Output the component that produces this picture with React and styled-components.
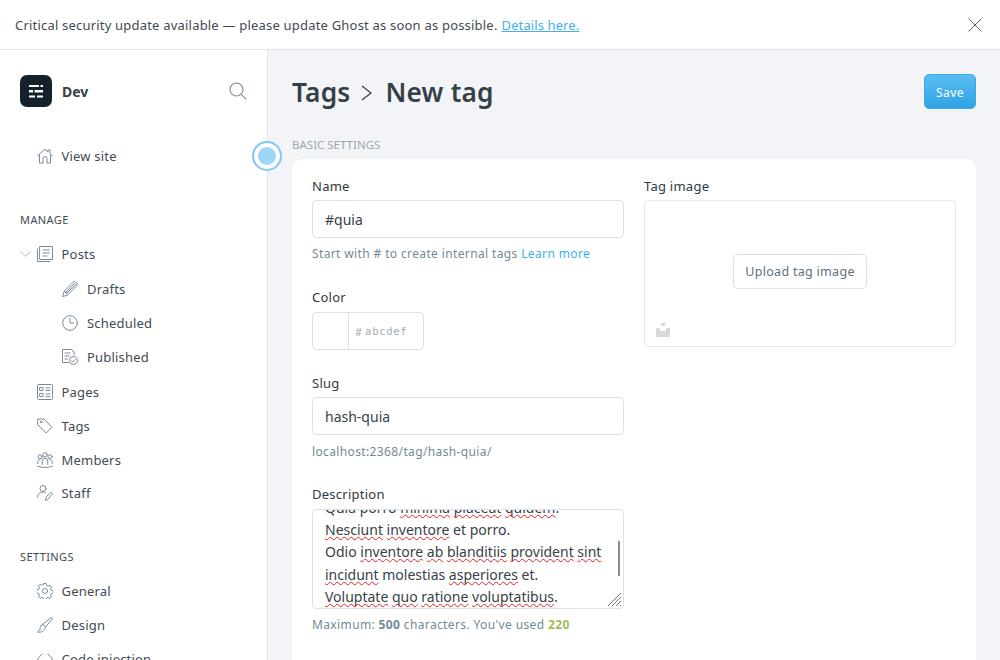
import React from "react";
import styled, { createGlobalStyle } from "styled-components";

const GlobalStyle = createGlobalStyle`
  html, body {
    margin: 0;
    height: 100%;
    overflow: hidden;
    background: #fff;
    font-family: "Noto Sans", "Open Sans", sans-serif;
    color: #394047;
  }
  * { box-sizing: border-box; }
`;

const Page = styled.div`
  width: 1000px;
  height: 660px;
  display: flex;
  flex-direction: column;
  overflow: hidden;
`;

const Banner = styled.div`
  height: 50px;
  flex: none;
  display: flex;
  align-items: center;
  justify-content: space-between;
  padding: 0 18px 0 15px;
  border-bottom: 1px solid #e1e3e5;
  font-size: 13px;
  letter-spacing: 0.2px;
  color: #3f4a52;
`;

const BannerLink = styled.a`
  color: #3eb0ef;
  text-decoration: underline;
  margin-left: 4px;
  letter-spacing: 0.1px;
`;

const Body = styled.div`
  flex: 1;
  display: flex;
  min-height: 0;
`;

const Sidebar = styled.aside`
  position: relative;
  width: 268px;
  flex: none;
  border-right: 1px solid #e5e7ed;
  padding: 25px 20px 0;
`;

const Brand = styled.div`
  display: flex;
  align-items: center;
  height: 32px;
  margin-bottom: 32px;
`;

const Logo = styled.div`
  width: 32px;
  height: 32px;
  border-radius: 7px;
  background: #15212a;
  display: flex;
  align-items: center;
  justify-content: center;
`;

const BrandName = styled.div`
  margin-left: 10px;
  flex: 1;
  font-size: 14px;
  font-weight: 700;
  color: #394047;
`;

const PulseAnchor = styled.div`
  position: absolute;
  right: 0;
  top: 91px;
  width: 0;
  height: 30px;
`;

const Pulse = styled.div`
  position: absolute;
  left: -15px;
  top: 50%;
  transform: translateY(-50%);
  width: 30px;
  height: 30px;
  border: 2px solid #7fc8f5;
  border-radius: 50%;
  background: #fff;
  display: flex;
  align-items: center;
  justify-content: center;
  &::after {
    content: "";
    width: 18px;
    height: 18px;
    border-radius: 50%;
    background: #9cd6f8;
  }
`;

const Nav = styled.nav`
  display: flex;
  flex-direction: column;
`;

const SubNav = styled.div`
  display: flex;
  flex-direction: column;
  padding: 1px 0;
`;

const Item = styled.div`
  display: flex;
  align-items: center;
  height: ${(p) => p.$h || 34}px;
  padding-left: ${(p) => (p.$sub ? 42 : 17)}px;
  font-size: 13px;
  letter-spacing: 0.2px;
  color: #3f4a52;
  position: relative;
  svg.icon {
    width: 16px;
    height: 16px;
    flex: none;
    margin-right: ${(p) => (p.$sub ? 9 : 8.5)}px;
    fill: none;
    stroke: #7c8b9a;
    stroke-width: 1;
  }
`;

const Caret = styled.svg`
  position: absolute;
  left: 0;
  top: 50%;
  margin-top: -3px;
  width: 11px;
  height: 6px;
  fill: none;
  stroke: #b5bec6;
  stroke-width: 1;
`;

const SectionTitle = styled.div`
  font-size: 11px;
  letter-spacing: 0.4px;
  color: #3f4a52;
  height: 16px;
  line-height: 16px;
  margin-top: ${(p) => p.$top || 39}px;
  margin-bottom: 9px;
`;

const Main = styled.main`
  flex: 1;
  min-width: 0;
  background: #f3f4f8;
  padding: 24px 24px 0;
`;

const Header = styled.div`
  display: flex;
  align-items: center;
  justify-content: space-between;
  height: 35px;
`;

const Title = styled.h1`
  margin: 0;
  display: flex;
  align-items: center;
  font-size: 26.3px;
  font-weight: 600;
  color: #343f46;
  letter-spacing: 0.2px;
`;

const Chevron = styled.svg`
  width: 14px;
  height: 18px;
  margin: 3px 11px 0 10px;
  fill: none;
  stroke: #343f46;
  stroke-width: 1.2;
`;

const SaveButton = styled.button`
  width: 52px;
  height: 35px;
  border: 1px solid #3ea9e8;
  border-radius: 5px;
  background: linear-gradient(#5bbcf3, #2ea3e4);
  color: #fff;
  font-family: inherit;
  font-size: 12px;
  letter-spacing: 0.4px;
  padding: 1px 0 0;
`;

const SectionLabel = styled.div`
  margin-top: 28px;
  height: 16px;
  line-height: 16px;
  font-size: 11.5px;
  color: #98a8b4;
  text-transform: uppercase;
`;

const Card = styled.section`
  margin-top: 6px;
  background: #fff;
  border-radius: 10px;
  padding: 18px 20px 0;
  height: 520px;
  display: grid;
  grid-template-columns: 312px 312px;
  column-gap: 20px;
  box-shadow: 0 0 1px rgba(0, 0, 0, 0.06);
`;

const Column = styled.div`
  display: flex;
  flex-direction: column;
`;

const Field = styled.div`
  margin-bottom: ${(p) => p.$mb || 0}px;
`;

const Label = styled.div`
  font-size: 13px;
  font-weight: 400;
  height: 18px;
  line-height: 18px;
  letter-spacing: 0.25px;
  color: #2f383f;
  margin-bottom: ${(p) => p.$gap || 5}px;
`;

const Input = styled.div`
  height: 38px;
  border: 1px solid #d8e2e8;
  border-radius: 4px;
  padding: 0 12px;
  display: flex;
  align-items: center;
  font-size: 14px;
  color: #394047;
  background: #fff;
`;

const Help = styled.div`
  margin-top: ${(p) => p.$gap || 7}px;
  height: 17px;
  line-height: 17px;
  font-size: 12px;
  letter-spacing: 0.37px;
  color: #738a94;
`;

const HelpLink = styled.a`
  color: #3eb0ef;
`;

const ColorBox = styled.div`
  width: 112px;
  height: 38px;
  border: 1px solid #d8e2e8;
  border-radius: 4px;
  display: flex;
  align-items: center;
`;

const Swatch = styled.div`
  width: 36px;
  height: 100%;
  border-right: 1px solid #d8e2e8;
`;

const Hash = styled.span`
  margin-left: 6px;
  font-size: 11px;
  color: #a5abb0;
`;

const HexText = styled.span`
  margin-left: 3px;
  font-family: "DejaVu Sans Mono", monospace;
  font-size: 10.5px;
  letter-spacing: 0.7px;
  color: #a5abb0;
`;

const TextArea = styled.div`
  position: relative;
  height: 100px;
  border: 1px solid #d8e2e8;
  border-radius: 4px;
  padding: 0 12px;
  overflow: hidden;
  font-size: 14px;
  line-height: 22.4px;
  color: #394047;
`;

const TextLines = styled.div`
  margin-top: -13.4px;
`;

const Typo = styled.span`
  text-decoration: underline wavy #e02020 1px;
  text-underline-offset: 1px;
  text-decoration-skip-ink: none;
`;

const ScrollThumb = styled.div`
  position: absolute;
  right: 3px;
  top: 31px;
  width: 2px;
  height: 35px;
  background: #8a8a8a;
`;

const Grip = styled.svg`
  position: absolute;
  right: 1px;
  bottom: 1px;
  width: 15px;
  height: 15px;
  stroke: #777;
  stroke-width: 1;
`;

const Strong = styled.b`
  font-weight: 700;
  color: ${(p) => p.$color};
`;

const ImageBox = styled.div`
  position: relative;
  height: 147px;
  border: 1px solid #e4ebef;
  border-radius: 4px;
  display: flex;
  align-items: center;
  justify-content: center;
`;

const UploadButton = styled.div`
  width: 134px;
  height: 35px;
  margin-bottom: 4px;
  border: 1px solid #d8e2e8;
  border-radius: 5px;
  display: flex;
  align-items: center;
  justify-content: center;
  font-size: 12.5px;
  letter-spacing: 0.3px;
  color: #5f707c;
`;

const ImageMark = styled.svg`
  position: absolute;
  left: 11px;
  bottom: 9px;
  width: 14px;
  height: 14px;
  fill: #d9d9d9;
`;

const SearchIcon = styled.svg`
  width: 18px;
  height: 18px;
  fill: none;
  stroke: #7c8b9a;
  stroke-width: 1.1;
`;

const CloseIcon = styled.svg`
  width: 14px;
  height: 14px;
  fill: none;
  stroke: #5c6770;
  stroke-width: 1;
`;

const Icon = ({ children }) => (
  <svg className="icon" viewBox="0 0 16 16" strokeLinecap="round" strokeLinejoin="round">
    {children}
  </svg>
);

const icons = {
  home: (
    <Icon>
      <path d="M.5 8 8 1l3 2.8V2h2v3.7L15.5 8M2.5 7v8h3.5v-4.5a2 2 0 0 1 4 0V15h3.5V7" />
    </Icon>
  ),
  posts: (
    <Icon>
      <path d="M3 .5h12.5v13H3zM.5 3v12.5H13M6 4h6.5M6 7h6.5M6 10h4" />
    </Icon>
  ),
  drafts: (
    <Icon>
      <path d="M.8 15.200l1.400-5L11.500.9a1.500 1.500 0 0 1 2.100 0l1.500 1.500a1.500 1.500 0 0 1 0 2.100L5.800 13.800zM2.200 10.200c1 0 1.300.6 1.300 1.300 1 0 1.500.5 1.500 1.300M3.500 11.500 13.200 1.800M4.700 12.300 14.400 3.200" />
    </Icon>
  ),
  clock: (
    <Icon>
      <circle cx="8" cy="8" r="7.300" />
      <path d="M8 3.500V8h3.500" />
    </Icon>
  ),
  published: (
    <Icon>
      <path d="M6.500 13.500H.5V.5h9l2.500 2.500v3M3 4h5M3 7h4M3 10h2.500" />
      <circle cx="11.500" cy="11.500" r="4" />
      <path d="M9.700 11.600l1.300 1.300 2.300-2.600" />
    </Icon>
  ),
  pages: (
    <Icon>
      <rect x=".5" y=".5" width="15" height="15" rx="1" />
      <path d="M3 3.500h3v3H3zM3 9.500h3v3H3zM9 4h4M9 6.500h4M9 10h4M9 12.500h4" />
    </Icon>
  ),
  tags: (
    <Icon>
      <path d="M1 1h6l8 8.200-5.800 5.800L1 7z" />
      <circle cx="4" cy="4" r=".8" />
    </Icon>
  ),
  members: (
    <Icon>
      <circle cx="8" cy="2.800" r="2.200" />
      <circle cx="3" cy="4.800" r="2" />
      <circle cx="13" cy="4.800" r="2" />
      <path d="M5.200 12.500V9a2.800 2.800 0 0 1 5.600 0v3.500M.8 11.500V9.500c0-1 1-1.800 2.200-1.800M15.200 11.500V9.500c0-1-1-1.800-2.200-1.800M.5 14c4 2 11 2 15 0" />
    </Icon>
  ),
  staff: (
    <Icon>
      <circle cx="6" cy="3.500" r="3" />
      <path d="M.5 12c0-3 2.500-5 5.500-5 1 0 2 .3 2.500.7M8.500 15l.7-3L14 7.200l1.500 1.500L10.800 14.300z" />
    </Icon>
  ),
  general: (
    <Icon>
      <circle cx="8" cy="8" r="2.500" />
      <path d="M6.800.5h2.400l.4 2 1.500.7 1.800-1 1.600 1.700-1 1.700.7 1.600 2 .4v2.400l-2 .5-.7 1.500 1 1.800-1.600 1.600-1.800-1-1.500.7-.4 2H6.800l-.4-2-1.500-.7-1.800 1-1.600-1.600 1-1.800-.7-1.500-2-.5V6.600l2-.4.7-1.600-1-1.700 1.600-1.700 1.800 1 1.500-.7z" />
    </Icon>
  ),
  design: (
    <Icon>
      <path d="M14 .8c1-.6 1.800.2 1.200 1.200L8.500 10 6 7.500zM6 7.500C3.300 7.500 3.500 10 3 12c-.3 1.200-1.200 2.300-2.500 3 3 .7 7.800-.5 8-5" />
    </Icon>
  ),
  code: (
    <Icon>
      <path d="M5 3 .5 8 5 13M11 3l4.500 5L11 13" />
    </Icon>
  ),
};

const NavItem = ({ icon, label, sub, h, caret }) => (
  <Item $sub={sub} $h={h}>
    {caret && (
      <Caret viewBox="0 0 11 6">
        <path d="M.5.5 5.500 5.500l5-5" />
      </Caret>
    )}
    {icons[icon]}
    {label}
  </Item>
);

const App = () => (
  <Page>
    <GlobalStyle />
    <Banner>
      <div>
        Critical security update available — please update Ghost as soon as possible.
        <BannerLink>Details here.</BannerLink>
      </div>
      <CloseIcon viewBox="0 0 14 14">
        <path d="M.5.5l13 13M13.500.5l-13 13" />
      </CloseIcon>
    </Banner>
    <Body>
      <Sidebar>
        <Brand>
          <Logo>
            <svg width="14" height="14" viewBox="0 0 14 14" fill="#fff">
              <rect x="0" y="1" width="10" height="2" />
              <rect x="11.500" y="1" width="2.500" height="2" />
              <rect x="0" y="6" width="4" height="2.500" />
              <rect x="5.500" y="6" width="8.500" height="2.500" />
              <rect x="0" y="11.500" width="6" height="2" />
              <rect x="8" y="11.500" width="6" height="2" />
            </svg>
          </Logo>
          <BrandName>Dev</BrandName>
          <SearchIcon viewBox="0 0 18 18">
            <circle cx="7.500" cy="7.500" r="6.500" />
            <path d="M12.300 12.300l5 5" />
          </SearchIcon>
        </Brand>
        <Nav>
          <NavItem icon="home" label="View site" />
          <SectionTitle>MANAGE</SectionTitle>
          <NavItem icon="posts" label="Posts" caret />
          <SubNav>
            <NavItem icon="drafts" label="Drafts" sub />
            <NavItem icon="clock" label="Scheduled" sub />
            <NavItem icon="published" label="Published" sub />
          </SubNav>
          <NavItem icon="pages" label="Pages" />
          <NavItem icon="tags" label="Tags" />
          <NavItem icon="members" label="Members" />
          <NavItem icon="staff" label="Staff" h={32} />
          <SectionTitle $top={40}>SETTINGS</SectionTitle>
          <NavItem icon="general" label="General" />
          <NavItem icon="design" label="Design" />
          <NavItem icon="code" label="Code injection" />
        </Nav>
        <PulseAnchor>
          <Pulse />
        </PulseAnchor>
      </Sidebar>
      <Main>
        <Header>
          <Title>
            Tags
            <Chevron viewBox="0 0 14 18">
              <path d="M2 2l9 7-9 7" />
            </Chevron>
            New tag
          </Title>
          <SaveButton>Save</SaveButton>
        </Header>
        <SectionLabel>Basic settings</SectionLabel>
        <Card>
          <Column>
            <Field $mb={26}>
              <Label>Name</Label>
              <Input>#quia</Input>
              <Help>
                Start with # to create internal tags <HelpLink>Learn more</HelpLink>
              </Help>
            </Field>
            <Field $mb={24}>
              <Label $gap={6}>Color</Label>
              <ColorBox>
                <Swatch />
                <Hash>#</Hash>
                <HexText>abcdef</HexText>
              </ColorBox>
            </Field>
            <Field $mb={25}>
              <Label>Slug</Label>
              <Input>hash-quia</Input>
              <Help $gap={8}>localhost:2368/tag/hash-quia/</Help>
            </Field>
            <Field>
              <Label $gap={6}>Description</Label>
              <TextArea>
                <TextLines>
                  <div>
                    Quia porro <Typo>minima</Typo> <Typo>placeat</Typo> <Typo>quidem</Typo>.
                  </div>
                  <div>
                    <Typo>Nesciunt</Typo> <Typo>inventore</Typo> et porro.
                  </div>
                  <div>
                    Odio <Typo>inventore</Typo> <Typo>ab</Typo> <Typo>blanditiis</Typo>{" "}
                    <Typo>provident</Typo> <Typo>sint</Typo>
                  </div>
                  <div>
                    <Typo>incidunt</Typo> molestias <Typo>asperiores</Typo> et.
                  </div>
                  <div>
                    <Typo>Voluptate</Typo> <Typo>quo</Typo> <Typo>ratione</Typo>{" "}
                    <Typo>voluptatibus</Typo>.
                  </div>
                </TextLines>
                <ScrollThumb />
                <Grip viewBox="0 0 15 15">
                  <path d="M1 14 14 1M5 14l9-9M9 14l5-5M13 14l1-1" />
                </Grip>
              </TextArea>
              <Help>
                Maximum: <Strong $color="#738a94">500</Strong> characters. You've used{" "}
                <Strong $color="#9fbb58">220</Strong>
              </Help>
            </Field>
          </Column>
          <Column>
            <Label>Tag image</Label>
            <ImageBox>
              <UploadButton>Upload tag image</UploadButton>
              <ImageMark viewBox="0 0 14 14">
                <path d="M5 0h4v3H5zM0 5h4v3h6V5h4v9H0z" />
              </ImageMark>
            </ImageBox>
          </Column>
        </Card>
      </Main>
    </Body>
  </Page>
);

export default App;
